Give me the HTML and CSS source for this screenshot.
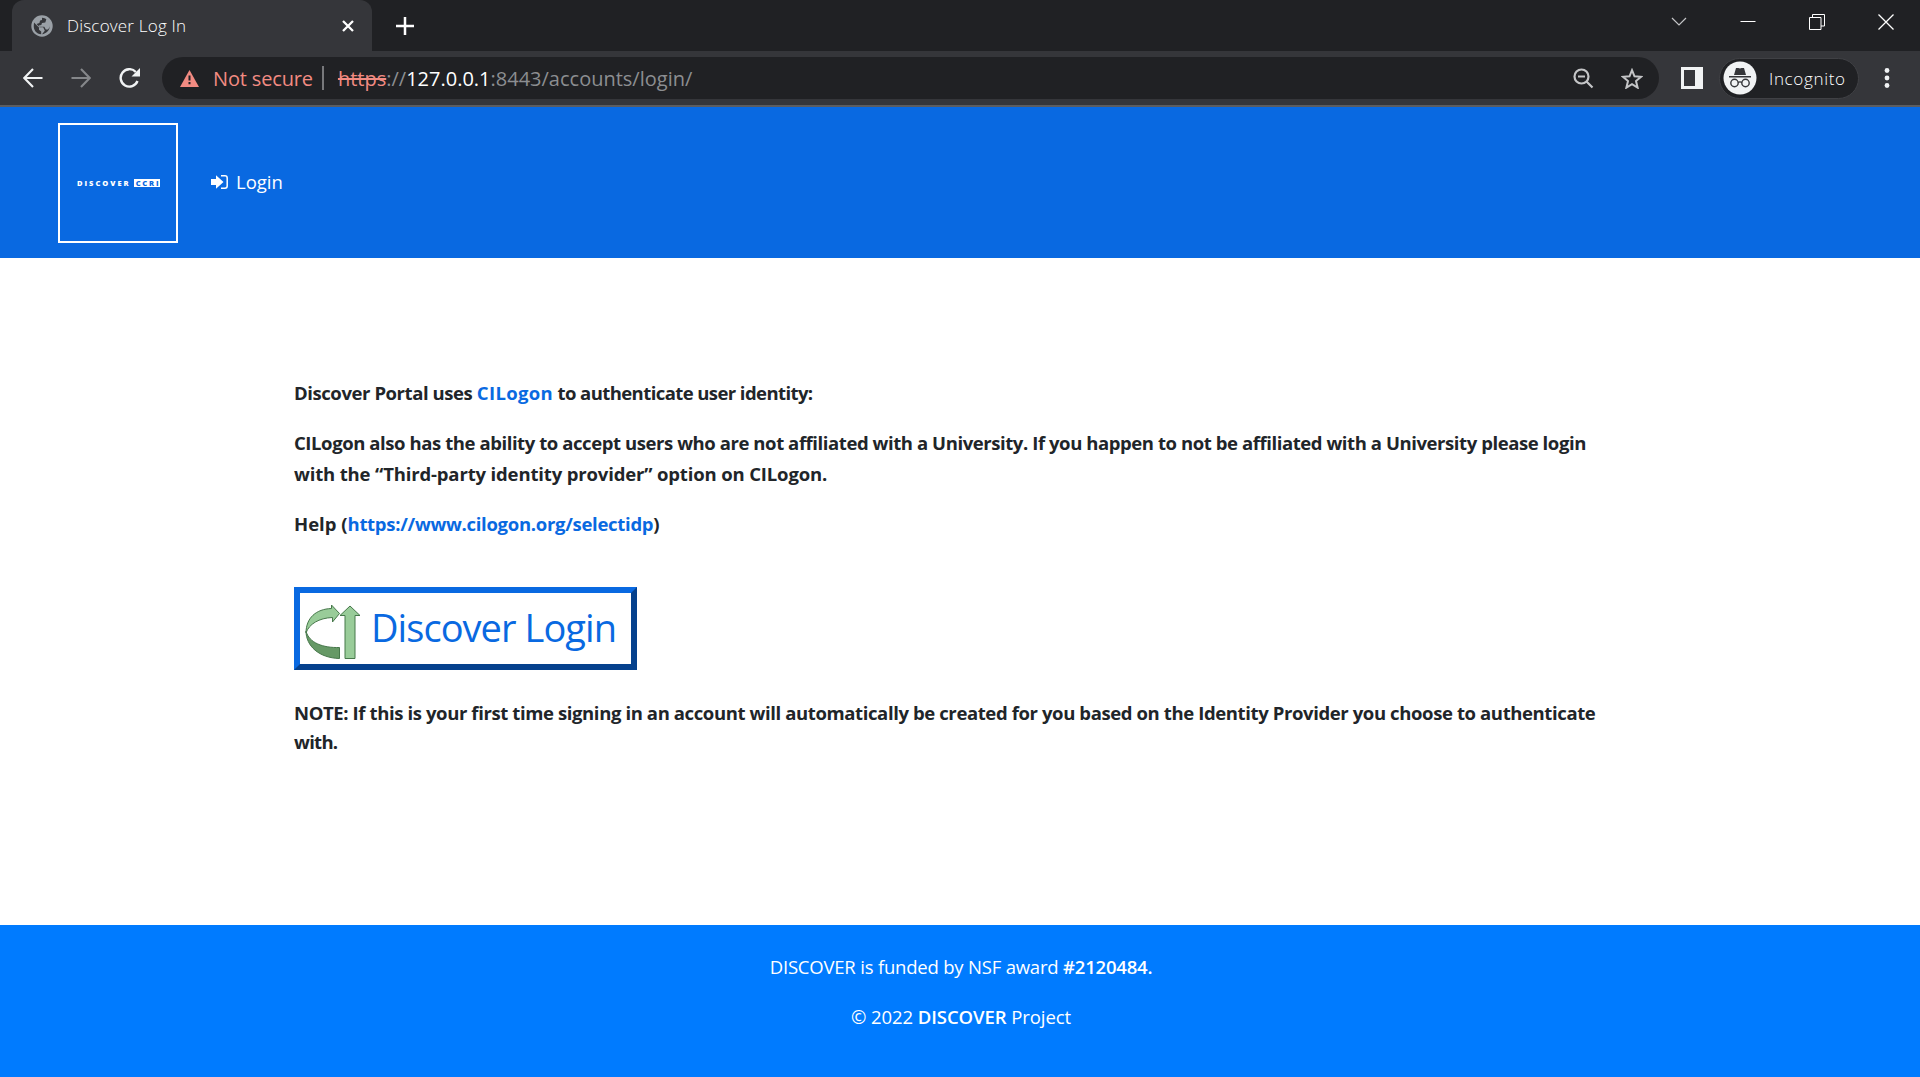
FILE: index.html
```html
<!DOCTYPE html>
<html lang="en">
<head>
<meta charset="utf-8">
<title>Discover Log In</title>
<link rel="stylesheet" href="styles.css">
</head>
<body>
<div class="tabs">
  <div class="tab">
    <svg class="globe" width="22" height="22" viewBox="0 0 22 22"><circle cx="11" cy="11" r="10.7" fill="#9aa0a6"/><path d="M3 7.500 8 12.500v2.300l2.200 1.600v2.800C5.500 19 2.200 15 2.800 10zM11 2.700c2 0 3.500.8 4.300 1.500l-1 3.300-3.300.4-.7 2.100-2.500.6v1.200h5.500l1.500 2.600 2 .2c1.100-1 2-2.300 2.200-4.300-.2 5-3.800 8.600-8 8.900l2.800-3.500-1.600-3.400H8.500L5.600 9l2.800-1 .7-2.500L11 5z" fill="#35363a"/></svg>
    <span class="tab-title">Discover Log In</span>
    <svg class="tab-close" width="14" height="14" viewBox="0 0 14 14"><path d="M2 2l10 10M12 2 2 12" stroke="#fff" stroke-width="2.300"/></svg>
  </div>
  <svg class="plus" width="20" height="20" viewBox="0 0 20 20"><path d="M10 1v18M1 10h18" stroke="#fff" stroke-width="2.500"/></svg>
  <div class="window-buttons">
    <svg width="16" height="16" viewBox="0 0 16 16"><path d="M1 4l7 7 7-7" fill="none" stroke="#c4c5c7" stroke-width="1.200"/></svg>
    <svg width="16" height="16" viewBox="0 0 16 16"><path d="M.5 7.500h15" stroke="#fff"/></svg>
    <svg width="16" height="16" viewBox="0 0 16 16"><path d="M.5 3.500h11.500v12H.5zM3.500 3.500v-3h12v11.500H12" fill="none" stroke="#fff"/></svg>
    <svg width="16" height="16" viewBox="0 0 16 16"><path d="M.5.500l15 15M15.500.500l-15 15" stroke="#fff" stroke-width="1.300"/></svg>
  </div>
</div>
<div class="toolbar">
  <svg class="nav-back" width="20" height="20" viewBox="0 0 20 20"><path d="M19.500 10H1.500M10 1 1.300 10l8.700 9" fill="none" stroke="#f1f3f4" stroke-width="2.100"/></svg>
  <svg class="nav-forward" width="20" height="20" viewBox="0 0 20 20"><path d="M.5 10h18M10 1l8.700 9-8.700 9" fill="none" stroke="#85878a" stroke-width="2.100"/></svg>
  <svg class="nav-reload" width="22" height="20" viewBox="0 0 22 20"><path d="M18.500 13A8.700 8.700 0 1 1 16.800 4" fill="none" stroke="#f1f3f4" stroke-width="2.400"/><path d="M21 0v8.500h-8.500z" fill="#f1f3f4"/></svg>
  <div class="omnibox">
    <svg class="warning" width="19" height="17" viewBox="0 0 19 17"><path d="M9.500 0 19 17H0z" fill="#f28b82"/><path d="M9.500 5.500v5M9.500 12v2.300" stroke="#202124" stroke-width="2"/></svg>
    <span class="not-secure">Not secure</span>
    <span class="divider"></span>
    <span class="url"><s>https</s><span>://</span><b>127.0.0.1</b><span class="path">:8443/accounts/login/</span></span>
    <svg class="lens" width="21" height="21" viewBox="0 0 21 21"><circle cx="8.500" cy="8.500" r="7" fill="none" stroke="#c4c5c7" stroke-width="2.200"/><path d="M5 8.500h7M13.500 13.500l6 6" stroke="#c4c5c7" stroke-width="2.200"/></svg>
    <svg class="star" width="22" height="21" viewBox="0 0 22 21"><path d="M11 2.200l2.500 6.100 6.500.5-5 4.300 1.600 6.500-5.600-3.500-5.600 3.500L7 13.100 2 8.800l6.500-.5z" fill="none" stroke="#c4c5c7" stroke-width="2"/></svg>
  </div>
  <svg class="panel" width="22" height="22" viewBox="0 0 22 22"><path d="M0 0h22v22H0zM3 3v16h11V3z" fill="#f1f3f4" fill-rule="evenodd"/></svg>
  <div class="incognito">
    <svg width="34" height="34" viewBox="0 0 34 34"><circle cx="17" cy="17" r="16.500" fill="#f1f3f4"/><path d="M11 14l2-7h2.400q1.600.8 3.200 0H21l2 7zM6 15h22v1.500H6z" fill="#35363a"/><g fill="none" stroke="#35363a" stroke-width="1.400"><circle cx="11.500" cy="22" r="3.700"/><circle cx="22.500" cy="22" r="3.700"/><path d="M15 21.500q2-1.300 4 0"/></g></svg>
    <span>Incognito</span>
  </div>
  <svg class="dots" width="6" height="20" viewBox="0 0 6 20" fill="#f1f3f4"><circle cx="3" cy="2.500" r="2.400"/><circle cx="3" cy="10" r="2.400"/><circle cx="3" cy="17.500" r="2.400"/></svg>
</div>
<header class="site-header">
  <div class="logo"><span class="logo-name">DISCOVER</span><span class="logo-tag">CCRI</span></div>
  <a class="login-link"><svg width="17" height="14" viewBox="0 0 17 14"><path d="M0 4h5V.2L12.500 7 5 13.800V10H0z" fill="#fff"/><path d="M10 .8h4q2.200 0 2.200 2.200v8q0 2.200-2.200 2.200h-4" fill="none" stroke="#fff" stroke-width="1.500"/></svg><span>Login</span></a>
</header>
<main class="content">
  <p class="intro">Discover Portal uses <a>CILogon</a> <span>to authenticate user identity:</span></p>
  <p class="details"><span class="access">CILogon also has the ability to accept users who are not affiliated with a University. If you happen to not be affiliated with a University please login</span><br><span class="third-party">with the “Third-party identity provider” option on CILogon.</span></p>
  <p class="help">Help (<a>https://www.cilogon.org/selectidp</a>)</p>
  <button class="login-button">
    <svg width="56" height="56" viewBox="0 0 56 56" stroke="#47784b" stroke-width="1"><path d="M1 27C1 42 14 54 34.500 54.500V43.500C18 44 4 39 1 27z" fill="#669966"/><path d="M1 29C1 14 11 5 26.500 4.500V1l8 8.500-7 8.500v-4.500C14 14 4 20 1 29z" fill="#99cc99"/><path d="M45 2l10 9.500h-5v43H40v-43h-5z" fill="#99cc99"/></svg>
    <span>Discover Login</span>
  </button>
  <p class="note"><span class="note-line">NOTE: If this is your first time signing in an account will automatically be created for you based on the Identity Provider you choose to authenticate</span><br><span class="note-end">with.</span></p>
</main>
<footer class="site-footer">
  <p class="fund">DISCOVER is funded by NSF award <b>#2120484.</b></p>
  <p class="copy">© 2022 <b>DISCOVER</b> Project</p>
</footer>
</body>
</html>
```
FILE: styles.css
```css
* { box-sizing: border-box; }
body { margin: 0; height: 1077px; overflow: hidden; display: flex; flex-direction: column; background: #fff; color: #212529; font-family: "Open Sans", "Noto Sans", sans-serif; }
svg { display: block; flex: none; }
span, s, b { white-space: nowrap; }

/* Browser frame */
.tabs { height: 51px; flex: none; display: flex; background: #202124; }
.tab { width: 360px; height: 51px; margin-left: 12px; padding: 0 17px 0 19px; display: flex; align-items: center; background: #35363a; border-radius: 12px 12px 0 0; }
.tab-title { margin-left: 14px; flex: none; color: #fff; font-size: 17px; font-weight: 300; letter-spacing: .2px; }
.tab-close { margin-left: auto; }
.plus { margin: 16px 0 0 23px; }
.window-buttons { margin: 14px 26px 0 auto; display: flex; gap: 53px; }
.toolbar { height: 56px; flex: none; display: flex; align-items: center; background: #35363a; border-bottom: 2px solid #5c5d60; color: #f1f3f4; }
.nav-back { margin-left: 23px; }
.nav-forward { margin-left: 28px; }
.nav-reload { margin-left: 28px; }
.omnibox { width: 1497px; height: 42px; margin-left: 21px; padding: 0 16px 0 18px; display: flex; align-items: center; border-radius: 21px; background: #202124; font-size: 20px; }
.not-secure { margin-left: 14px; color: #f28b82; letter-spacing: -.15px; }
.divider { width: 2px; height: 24px; margin-left: 9px; background: #77787b; }
.url { display: flex; margin-left: 14px; color: #8c8e91; }
.url s { color: #f28b82; }
.url b { color: #fff; font-weight: 400; }
.lens { margin-left: auto; }
.star { margin-left: 27px; }
.panel { margin-left: 22px; }
.incognito { width: 140px; height: 41px; margin-left: 16px; padding-left: 3px; display: flex; align-items: center; border: 1px solid #404145; border-radius: 21px; background: #202124; color: #fff; font-size: 17px; font-weight: 300; }
.incognito span { margin-left: 12px; letter-spacing: .65px; }
.dots { margin-left: 25px; }

/* Site header */
.site-header { height: 151px; flex: none; padding: 16px 58px; display: flex; background: #0969e1; color: #fff; }
.logo { width: 120px; height: 120px; border: 2px solid #fff; display: flex; align-items: center; padding-left: 17px; font-size: 7.5px; font-weight: 800; line-height: 8px; }
.logo-name { letter-spacing: 2px; }
.logo-tag { margin-left: 3px; padding-left: 2px; background: #fff; color: #0969e1; letter-spacing: 1.8px; }
.login-link { height: 118px; margin-left: 33px; display: flex; align-items: center; font-size: 18.5px; }
.login-link span { margin: -2px 0 0 8px; }

/* Login page */
.content { height: 667px; flex: none; padding: 120px 290px 0 294px; display: flex; flex-direction: column; align-items: flex-start; font-size: 18.5px; font-weight: 700; line-height: 30px; }
.content p { margin: 0 0 20px; }
.content a { color: #0969e1; }
.intro { letter-spacing: -.42px; }
.intro a { letter-spacing: .35px; }
.intro span { letter-spacing: -.58px; }
.content .details { line-height: 30.5px; }
.access { letter-spacing: -.42px; }
.third-party { letter-spacing: -.15px; }
.help a { letter-spacing: -.29px; }
.login-button { width: 343px; height: 83px; margin: 28px 0 28px; padding: 0 0 0 5px; display: flex; align-items: center; border: 6px outset #0969e1; background: #fff; color: #0969e1; font: 400 38px "Open Sans", sans-serif; }
.login-button svg { margin-top: 6px; }
.login-button span { margin: -4px 0 0 10px; letter-spacing: -.95px; }
.content .note { line-height: 29px; }
.note-line { letter-spacing: -.385px; }
.note-end { letter-spacing: -.7px; }

/* Footer */
.site-footer { flex: 1; padding: 27px 0 0 2px; background: #007bff; color: #fff; text-align: center; font-size: 18.5px; line-height: 30px; }
.site-footer p { margin: 0 0 20px; }
.site-footer b { font-weight: 600; }
.fund { letter-spacing: -.2px; }
.copy { letter-spacing: -.08px; }
```
